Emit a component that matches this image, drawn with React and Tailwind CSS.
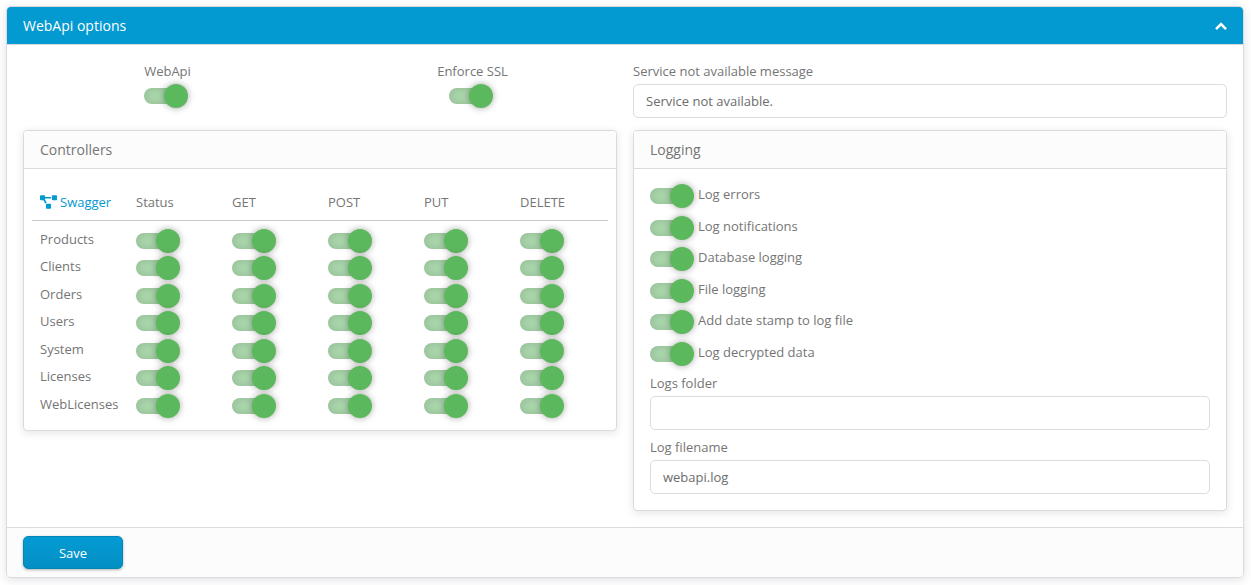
import React, { useState } from 'react';
import { FaProjectDiagram } from 'react-icons/fa';

const methods = ['Status', 'GET', 'POST', 'PUT', 'DELETE'];
const controllers = ['Products', 'Clients', 'Orders', 'Users', 'System', 'Licenses', 'WebLicenses'];

const logOptions = [
  { id: 'log-errors', label: 'Log errors' },
  { id: 'log-notifications', label: 'Log notifications' },
  { id: 'log-database', label: 'Database logging' },
  { id: 'log-file', label: 'File logging' },
  { id: 'log-date-stamp', label: 'Add date stamp to log file' },
  { id: 'log-decrypted', label: 'Log decrypted data' },
];

function Toggle({ id, ...props }) {
  return (
    <input
      id={id}
      type="checkbox"
      defaultChecked
      className="grid h-6 w-11 shrink-0 cursor-pointer appearance-none items-center before:h-4 before:w-10 before:rounded-full before:bg-[#bdbdbd] before:shadow-[inset_0_0_10px_rgba(0,0,0,0.15)] before:[grid-area:1/1] after:size-6 after:justify-self-start after:rounded-full after:bg-[#f5f5f5] after:shadow-[0_0_7px_rgba(0,0,0,0.35)] after:[grid-area:1/1] checked:before:bg-[#abd8ad] checked:after:justify-self-end checked:after:bg-[#5cb85c]"
      {...props}
    />
  );
}

function TextField({ id, label, defaultValue = '' }) {
  return (
    <div>
      <label htmlFor={id} className="mb-[3px] block leading-5">{label}</label>
      <input
        id={id}
        type="text"
        defaultValue={defaultValue}
        className="block h-[34px] w-full rounded-[5px] border border-[#dcdcdd] bg-white px-3 text-[#6c6c6c] outline-none focus:border-[#0399d1]"
      />
    </div>
  );
}

function Card({ title, children }) {
  return (
    <section className="rounded-[4px] border border-[#dbdbde] bg-white shadow-[0_2px_8px_rgba(40,40,80,0.12)]">
      <h2 className="rounded-t-[3px] border-b border-[#dbdbde] bg-[#fcfcfc] px-4 text-sm leading-[37px]">{title}</h2>
      {children}
    </section>
  );
}

function ControllersTable() {
  return (
    <table className="w-full table-fixed border-separate border-spacing-0 text-left">
      <thead>
        <tr>
          <th className="border-b border-[#c8c8c8] p-2 font-normal leading-5">
            <a href="#swagger" className="flex items-center gap-[3px] text-[#0399d1]">
              <FaProjectDiagram className="h-[14px] w-[17px]" />
              Swagger
            </a>
          </th>
          {methods.map((method) => (
            <th key={method} className="border-b border-[#c8c8c8] p-2 font-normal leading-5">{method}</th>
          ))}
        </tr>
      </thead>
      <tbody className="before:block before:h-2">
        {controllers.map((name) => (
          <tr key={name} className="odd:h-[27px] even:h-7">
            <td className="whitespace-nowrap px-2 py-0 align-top leading-5">{name}</td>
            {methods.map((method) => (
              <td key={method} className="px-2 py-0 align-top">
                <Toggle aria-label={`${name} ${method}`} />
              </td>
            ))}
          </tr>
        ))}
      </tbody>
    </table>
  );
}

export default function App() {
  const [open, setOpen] = useState(true);

  return (
    <div className="pb-2 pl-[6px] pr-[7px] pt-[6px] font-['Open_Sans',sans-serif] text-[13px] text-[#757575]">
      <form
        onSubmit={(e) => e.preventDefault()}
        className="rounded-[5px] border border-[#dbdbde] bg-white shadow-[0_2px_10px_rgba(40,40,80,0.14)]"
      >
        <div className="flex items-center justify-between rounded-t-[4px] border-b border-[#dbdbde] bg-[#0399d1] px-4 text-white">
          <h1 className="text-sm leading-[37px]">WebApi options</h1>
          <button type="button" aria-label="Toggle panel" onClick={() => setOpen(!open)} className="cursor-pointer">
            <svg viewBox="0 0 12 8" className={open ? 'h-2 w-3' : 'h-2 w-3 rotate-180'} fill="none" stroke="currentColor" strokeWidth="2.5">
              <path d="M1 7.1 6 2.1l5 5" />
            </svg>
          </button>
        </div>

        {open && (
          <div className="grid grid-cols-2 items-start gap-x-4 gap-y-3 p-4">
            <div className="grid grid-cols-2 gap-4">
              <div className="flex flex-col items-center gap-[3px]">
                <label htmlFor="webapi" className="leading-5">WebApi</label>
                <div className="pr-[3px]"><Toggle id="webapi" /></div>
              </div>
              <div className="flex flex-col items-center gap-[3px]">
                <label htmlFor="enforce-ssl" className="leading-5">Enforce SSL</label>
                <div className="pr-[3px]"><Toggle id="enforce-ssl" /></div>
              </div>
            </div>
            <TextField id="message" label="Service not available message" defaultValue="Service not available." />

            <Card title="Controllers">
              <div className="px-2 pb-[9px] pt-[15px]">
                <ControllersTable />
              </div>
            </Card>

            <Card title="Logging">
              <div className="px-4 pb-4 pt-[15px]">
                <ul>
                  {logOptions.map(({ id, label }) => (
                    <li key={id} className="flex items-start gap-1 odd:h-8 even:h-[31px]">
                      <Toggle id={id} />
                      <label htmlFor={id} className="leading-5">{label}</label>
                    </li>
                  ))}
                </ul>
                <div className="flex flex-col gap-[7px]">
                  <TextField id="logs-folder" label="Logs folder" />
                  <TextField id="log-filename" label="Log filename" defaultValue="webapi.log" />
                </div>
              </div>
            </Card>
          </div>
        )}

        <div className="rounded-b-[4px] border-t border-[#dbdbde] bg-[#fcfcfc] px-4 py-2">
          <button
            type="submit"
            className="block h-[33px] w-[100px] cursor-pointer rounded-[5px] border border-[#0385b5] bg-linear-to-b from-[#039bd4] to-[#038fc3] pt-0.5 text-white shadow-[0_1px_3px_rgba(0,0,0,0.3)]"
          >
            Save
          </button>
        </div>
      </form>
    </div>
  );
}
